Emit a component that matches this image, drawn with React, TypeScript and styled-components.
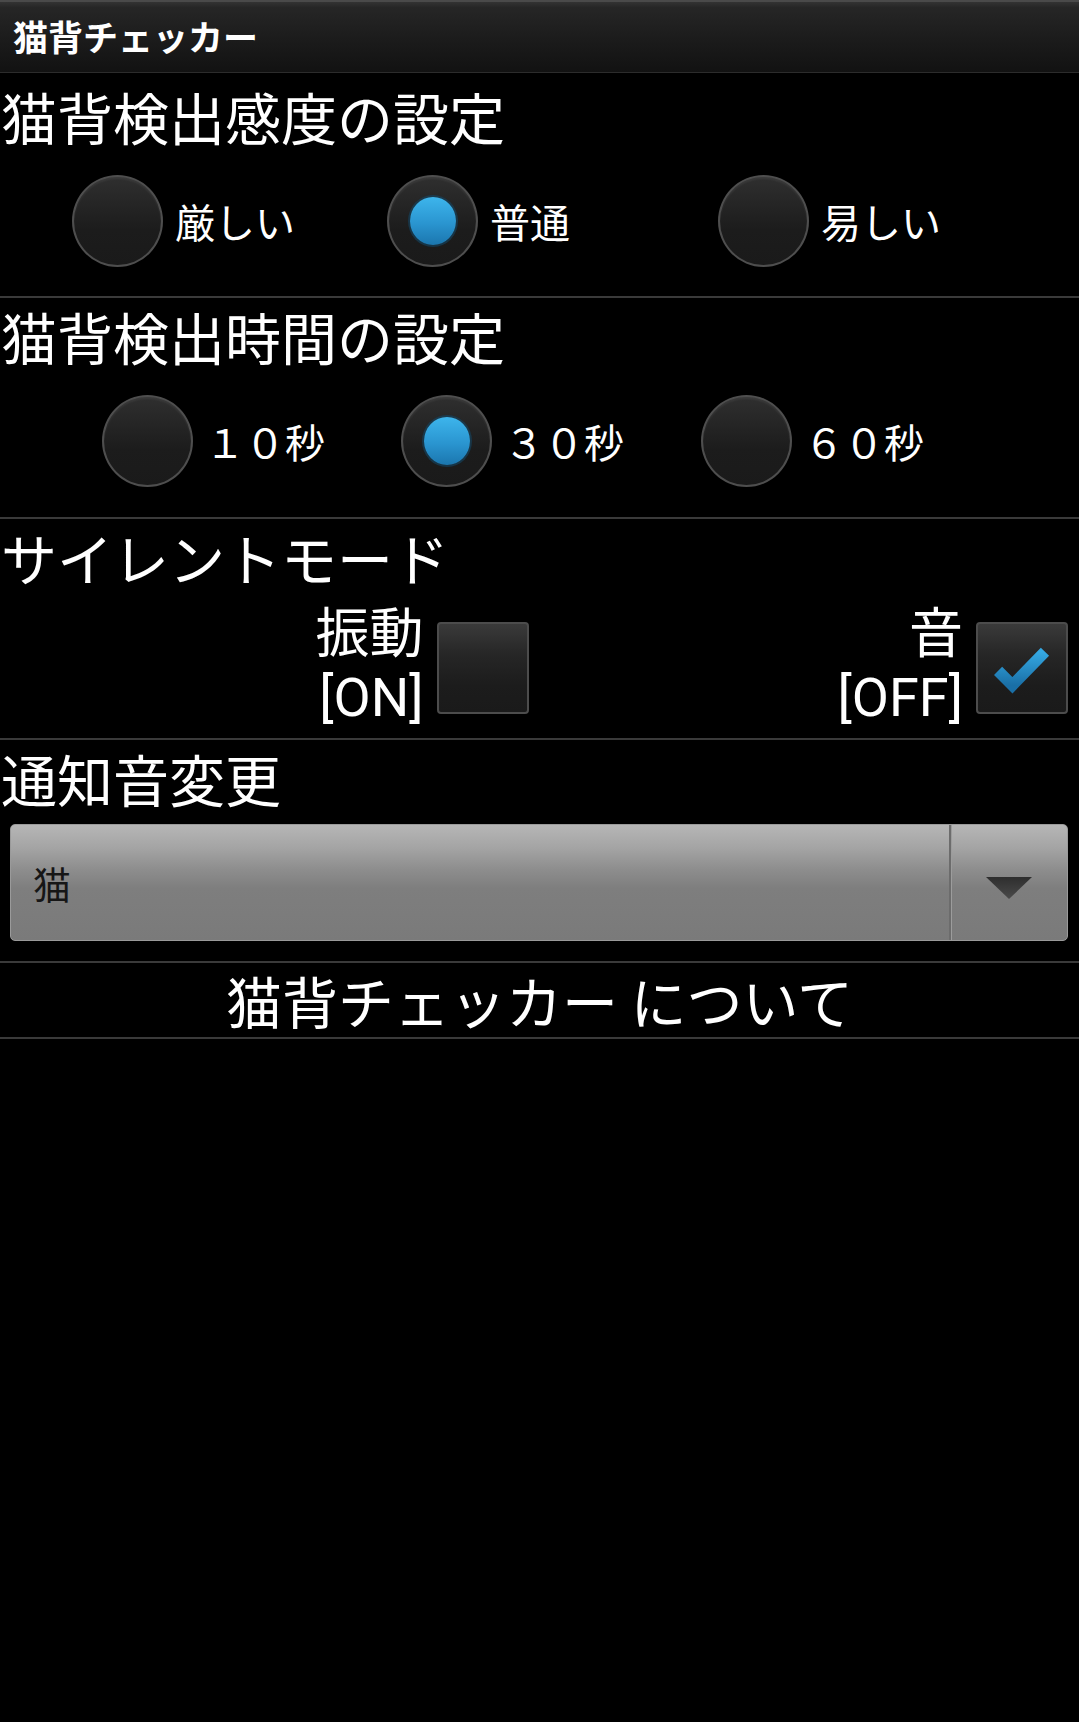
import { createGlobalStyle } from "styled-components"
import styled from "styled-components"

const GlobalStyle = createGlobalStyle`
  html, body {
    margin: 0;
    padding: 0;
    background: #000;
  }
  body {
    font-family: "Noto Sans CJK JP", "Noto Sans", sans-serif;
    color: #fff;
  }
`

type RadioOption = {
  label: string
  checked?: boolean
}

type RadioGroupProps = {
  offset: number
  cols: string
  options: RadioOption[]
}

const RadioGroup = (props: RadioGroupProps) => {
  return (
    <RadioRow $offset={props.offset} $cols={props.cols}>
      {props.options.map((option) => (
        <RadioItem key={option.label}>
          <RadioCircle $checked={!!option.checked} />
          <RadioLabel>{option.label}</RadioLabel>
        </RadioItem>
      ))}
    </RadioRow>
  )
}

const CheckMark = () => (
  <svg width="92" height="92" viewBox="0 0 92 92">
    <defs>
      <linearGradient id="chk" x1="0" y1="0" x2="0" y2="1">
        <stop offset="0" stopColor="#35a9e3" />
        <stop offset="1" stopColor="#1a6fa6" />
      </linearGradient>
    </defs>
    <polyline
      points="21,49 36,64 70,29"
      fill="none"
      stroke="url(#chk)"
      strokeWidth="12"
      strokeLinejoin="miter"
    />
  </svg>
)

type CheckOptionProps = {
  title: string
  state: string
  checked?: boolean
}

const CheckOption = (props: CheckOptionProps) => {
  return (
    <CheckItem>
      <CheckLabel>
        <CheckLine>{props.title}</CheckLine>
        <CheckLine>{props.state}</CheckLine>
      </CheckLabel>
      <CheckBox>{props.checked && <CheckMark />}</CheckBox>
    </CheckItem>
  )
}

export default function App() {
  return (
    <Screen>
      <GlobalStyle />
      <TitleBar>猫背チェッカー</TitleBar>

      <Section $pt={10} $pb={29}>
        <Heading>猫背検出感度の設定</Heading>
        <RadioGroup
          offset={72}
          cols="315px 331px auto"
          options={[{ label: "厳しい" }, { label: "普通", checked: true }, { label: "易しい" }]}
        />
      </Section>

      <Section $pt={5} $pb={30}>
        <Heading>猫背検出時間の設定</Heading>
        <RadioGroup
          offset={102}
          cols="299px 300px auto"
          options={[{ label: "１０秒" }, { label: "３０秒", checked: true }, { label: "６０秒" }]}
        />
      </Section>

      <Section $pt={5} $pb={9}>
        <Heading>サイレントモード</Heading>
        <CheckRow>
          <CheckOption title="振動" state="[ON]" />
          <CheckOption title="音" state="[OFF]" checked />
        </CheckRow>
      </Section>

      <Section $pt={5} $pb={20}>
        <Heading>通知音変更</Heading>
        <Spinner>
          <SpinnerText>猫</SpinnerText>
          <SpinnerButton>
            <svg width="46" height="22" viewBox="0 0 46 22">
              <defs>
                <linearGradient id="arr" x1="0" y1="0" x2="0" y2="1">
                  <stop offset="0" stopColor="#2e2e2e" />
                  <stop offset="1" stopColor="#4a4a4a" />
                </linearGradient>
              </defs>
              <polygon points="0,0 46,0 23,22" fill="url(#arr)" />
            </svg>
          </SpinnerButton>
        </Spinner>
      </Section>

      <Section $pt={4} $pb={4}>
        <AboutText>猫背チェッカー について</AboutText>
      </Section>
    </Screen>
  )
}

const Screen = styled.div`
  min-height: 1722px;
  background: #000;
`

const TitleBar = styled.header`
  height: 73px;
  box-sizing: border-box;
  display: flex;
  align-items: center;
  padding: 0 0 4px 13px;
  background: linear-gradient(#333333 0%, #262626 8%, #1a1a1a 60%, #121212 100%);
  border-top: 2px solid #4a4a4a;
  border-bottom: 1px solid #2c2c2c;
  font-size: 35px;
  font-weight: 700;
`

const Section = styled.section<{ $pt: number; $pb: number }>`
  padding: ${(p) => p.$pt}px 0 ${(p) => p.$pb}px;
  border-bottom: 2px solid #3a3a3a;
`

const Heading = styled.h2`
  margin: 0;
  padding-left: 1px;
  font-size: 56px;
  font-weight: 400;
  line-height: 66px;
  white-space: nowrap;
`

const RadioRow = styled.div<{ $offset: number; $cols: string }>`
  display: grid;
  grid-template-columns: ${(p) => p.$cols};
  padding-left: ${(p) => p.$offset}px;
  margin-top: 26px;
`

const RadioItem = styled.label`
  display: flex;
  align-items: center;
  gap: 12px;
`

const RadioCircle = styled.span<{ $checked: boolean }>`
  width: 91px;
  height: 92px;
  flex: none;
  box-sizing: border-box;
  border-radius: 50%;
  border: 2px solid #4e4e4e;
  background: linear-gradient(#2f2f2f, #1c1c1c 60%, #1a1a1a);
  box-shadow: inset 0 2px 2px rgba(255, 255, 255, 0.06);
  display: flex;
  align-items: center;
  justify-content: center;

  &::after {
    content: "";
    display: ${(p) => (p.$checked ? "block" : "none")};
    width: 46px;
    height: 48px;
    border-radius: 50%;
    background: linear-gradient(#3db5ec, #2a95d0 55%, #1b76ae);
    box-shadow: 0 0 0 2px rgba(20, 70, 100, 0.6);
  }
`

const RadioLabel = styled.span`
  font-size: 40px;
  line-height: 1;
  white-space: nowrap;
`

const CheckRow = styled.div`
  display: grid;
  grid-template-columns: 1fr 1fr;
  margin-top: 13px;
`

const CheckItem = styled.div`
  display: flex;
  justify-content: flex-end;
  align-items: flex-end;
  gap: 13px;
  padding-right: 11px;
`

const CheckLabel = styled.div`
  display: flex;
  flex-direction: column;
  align-items: flex-end;
`

const CheckLine = styled.span`
  display: block;
  height: 63px;
  font-family: Roboto, "Noto Sans CJK JP", sans-serif;
  font-size: 54px;
  line-height: 63px;
  white-space: nowrap;
`

const CheckBox = styled.span`
  width: 92px;
  height: 92px;
  flex: none;
  margin-bottom: 15px;
  box-sizing: border-box;
  border: 2px solid #4c4c4c;
  border-radius: 4px;
  background: linear-gradient(#3a3a3a, #262626 35%, #1c1c1c 70%, #1a1a1a);
  display: flex;
  align-items: center;
  justify-content: center;

  svg {
    display: block;
  }
`

const Spinner = styled.div`
  display: flex;
  height: 117px;
  margin: 13px 11px 0 10px;
  box-sizing: border-box;
  border: 1px solid #9a9a9a;
  border-radius: 5px;
  background: linear-gradient(#b6b6b6 0%, #a4a4a4 20%, #8e8e8e 38%, #7e7e7e 55%, #7a7a7a 100%);
`

const SpinnerText = styled.span`
  flex: 1;
  display: flex;
  align-items: center;
  padding-left: 22px;
  font-size: 38px;
  color: #161616;
`

const SpinnerButton = styled.span`
  width: 118px;
  display: flex;
  align-items: center;
  justify-content: center;
  border-left: 2px solid #6c6c6c;
  box-shadow: inset 1px 0 0 #9c9c9c;
  padding-top: 10px;
  box-sizing: border-box;
`

const AboutText = styled.div`
  font-size: 56px;
  line-height: 66px;
  text-align: center;
  white-space: nowrap;
`
